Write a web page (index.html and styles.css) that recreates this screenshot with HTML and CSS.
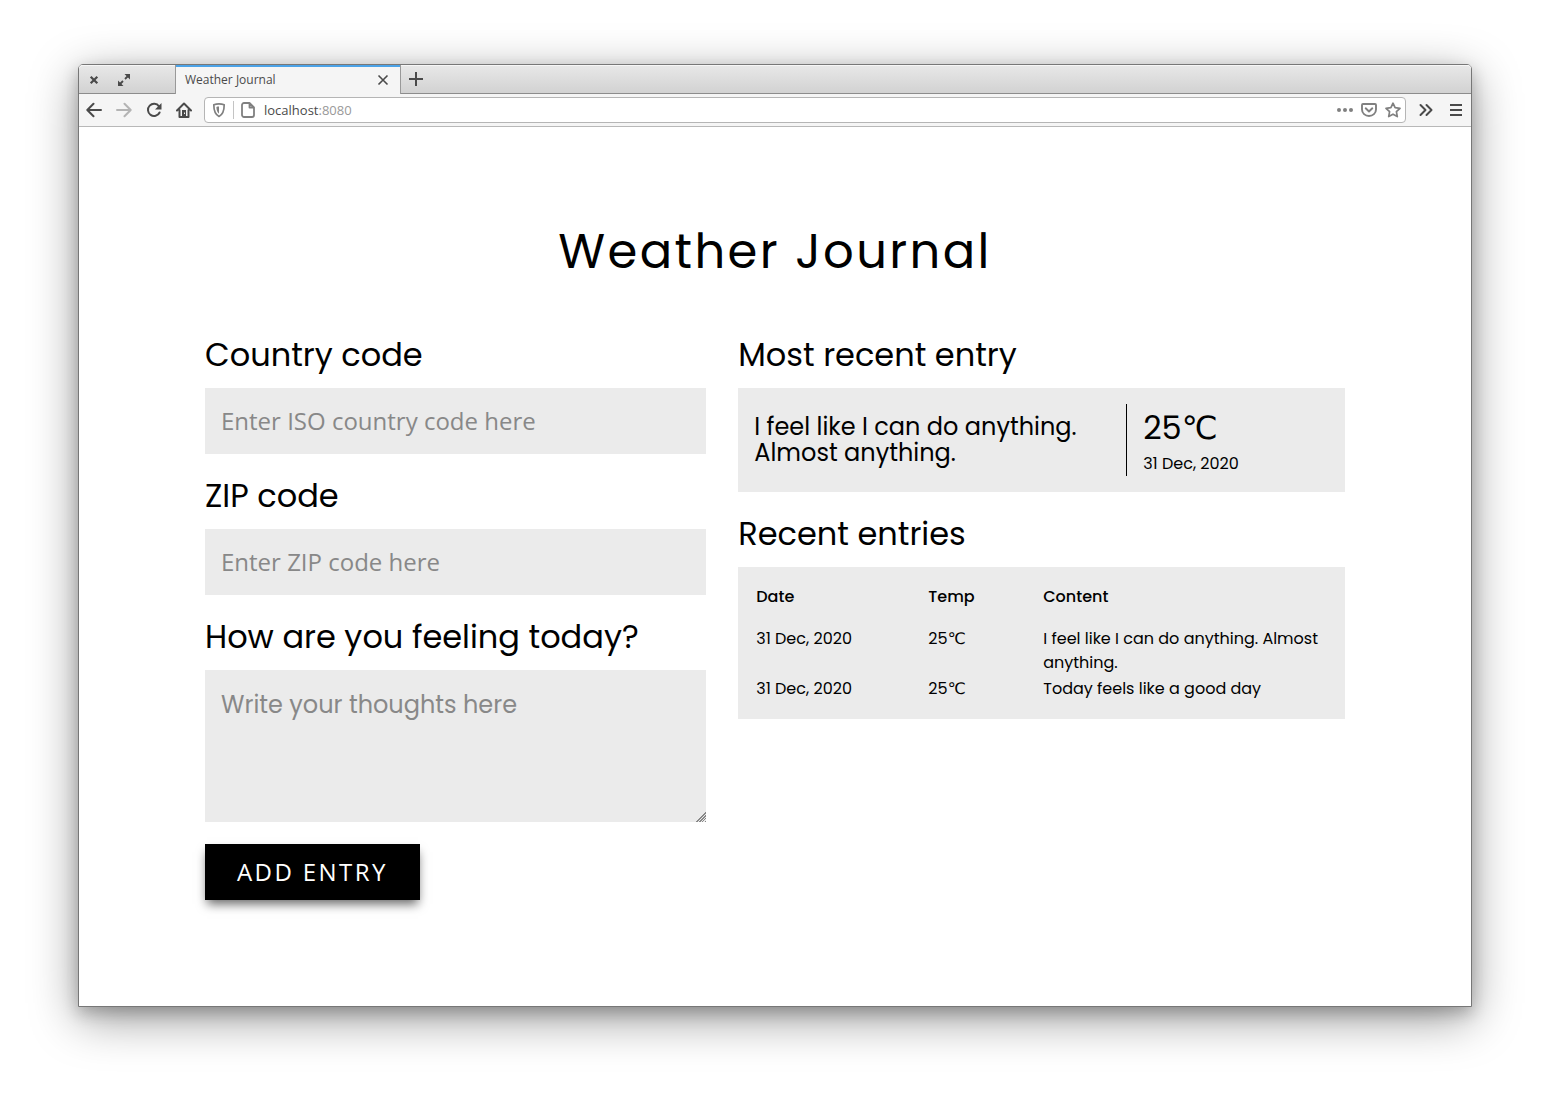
FILE: index.html
```html
<!DOCTYPE html>
<html lang="en">
<head>
<meta charset="utf-8">
<title>Weather Journal</title>
<link rel="stylesheet" href="styles.css">
</head>
<body>
<div class="window">
  <header class="chrome">
    <div class="tabbar">
      <div class="window-controls">
        <button type="button" class="icon-button" aria-label="Close window"><svg width="16" height="16" viewBox="0 0 16 16"><path d="M4.700 4.700l6.600 6.600M11.300 4.700l-6.600 6.600" stroke-width="2.200"/></svg></button>
        <button type="button" class="icon-button" aria-label="Maximize window"><svg width="16" height="16" viewBox="0 0 16 16"><path d="M9 7l3-3M7 9l-3 3" stroke-width="1.800"/><path class="solid" d="M8.500 2H14v5.500zM2 8.500V14h5.500z"/></svg></button>
      </div>
      <div class="tab">
        <span class="tab-title">Weather Journal</span>
        <button type="button" class="icon-button" aria-label="Close tab"><svg width="16" height="16" viewBox="0 0 16 16"><path d="M3.500 3.500l9 9M12.500 3.500l-9 9" stroke-width="1.600"/></svg></button>
      </div>
      <button type="button" class="icon-button new-tab" aria-label="New tab"><svg width="16" height="16" viewBox="0 0 16 16"><path d="M8 1v14M1 8h14" stroke-width="2"/></svg></button>
    </div>
    <div class="toolbar">
      <button type="button" class="icon-button" aria-label="Back"><svg width="16" height="16" viewBox="0 0 16 16"><path d="M1.500 8H15M7.500 1.800L1.300 8l6.200 6.200" stroke-width="2" stroke-linecap="round" stroke-linejoin="round"/></svg></button>
      <button type="button" class="icon-button faded" aria-label="Forward"><svg width="16" height="16" viewBox="0 0 16 16"><path d="M14.500 8H1M8.500 1.800L14.700 8l-6.200 6.200" stroke-width="2" stroke-linecap="round" stroke-linejoin="round"/></svg></button>
      <button type="button" class="icon-button" aria-label="Reload"><svg width="16" height="16" viewBox="0 0 16 16"><path d="M13 4.300A6.100 6.100 0 1 0 13.600 10.500" stroke-width="2" stroke-linecap="round"/><path class="solid" d="M15.500 1v6.500H9z"/></svg></button>
      <button type="button" class="icon-button" aria-label="Home"><svg width="16" height="16" viewBox="0 0 16 16"><path d="M1 8.500L8 1.500l7 7M3.500 8V15h9V8" stroke-width="2" stroke-linecap="round" stroke-linejoin="round"/><path class="solid" fill-rule="evenodd" d="M6 8h4v7H6zM8 10.500h1v1.500H8z"/></svg></button>
      <div class="address">
        <svg class="muted" width="16" height="16" viewBox="0 0 16 16"><path d="M8 1.800c1.800 0 3.600.3 5.200.9 0 5.500-.8 9.500-5.200 11.700C3.600 12.200 2.800 8.200 2.800 2.700 4.400 2.100 6.200 1.800 8 1.800z" stroke-width="1.700" stroke-linejoin="round"/><path class="solid" d="M8 4.500v7.300C6.200 10.300 5.500 8 5.400 4.900 6.200 4.600 7 4.500 8 4.500z"/></svg>
        <span class="divider"></span>
        <svg class="muted" width="16" height="16" viewBox="0 0 16 16"><path d="M4 1h5.500L14 5.500V13a2 2 0 0 1-2 2H4a2 2 0 0 1-2-2V3a2 2 0 0 1 2-2zM9.500 1v4.500H14" stroke-width="1.800" stroke-linejoin="round"/></svg>
        <span class="url">localhost<span class="port">:8080</span></span>
        <svg class="muted" width="16" height="16" viewBox="0 0 16 16"><circle class="solid" cx="2" cy="8" r="2"/><circle class="solid" cx="8" cy="8" r="2"/><circle class="solid" cx="14" cy="8" r="2"/></svg>
        <svg class="muted" width="16" height="16" viewBox="0 0 16 16"><path d="M2 2h12a1 1 0 0 1 1 1v4.500a7 6.500 0 0 1-14 0V3a1 1 0 0 1 1-1zM4.700 6.300L8 9.500l3.300-3.200" stroke-width="1.900" stroke-linecap="round" stroke-linejoin="round"/></svg>
        <svg class="muted" width="16" height="16" viewBox="0 0 16 16"><path d="M8 1.200l2.100 4.500 4.900.6-3.600 3.400.9 4.900L8 12.200l-4.300 2.400.9-4.900L1 6.300l4.900-.6z" stroke-width="1.700" stroke-linejoin="round"/></svg>
      </div>
      <button type="button" class="icon-button" aria-label="More tools"><svg width="16" height="16" viewBox="0 0 16 16"><path d="M2.500 3L7.500 8l-5 5M8.500 3l5 5-5 5" stroke-width="2" stroke-linecap="round" stroke-linejoin="round"/></svg></button>
      <button type="button" class="icon-button" aria-label="Menu"><svg width="16" height="16" viewBox="0 0 16 16"><path d="M2 3h12M2 8h12M2 13h12" stroke-width="2"/></svg></button>
    </div>
  </header>
  <main class="page">
    <h1 class="title">Weather Journal</h1>
    <div class="columns">
      <form class="column">
        <label class="heading" for="country">Country code</label>
        <input class="field" id="country" type="text" placeholder="Enter ISO country code here">
        <label class="heading" for="zip">ZIP code</label>
        <input class="field" id="zip" type="text" placeholder="Enter ZIP code here">
        <label class="heading" for="feelings">How are you feeling today?</label>
        <textarea class="field thoughts" id="feelings" placeholder="Write your thoughts here"></textarea>
        <button class="submit" type="button">Add entry</button>
      </form>
      <div class="column">
        <h2 class="heading">Most recent entry</h2>
        <section class="panel latest">
          <p class="latest-text">I feel like I can do anything. Almost anything.</p>
          <div class="latest-meta">
            <p class="latest-temp">25℃</p>
            <p class="latest-date">31 Dec, 2020</p>
          </div>
        </section>
        <h2 class="heading">Recent entries</h2>
        <section class="panel">
          <table class="entries">
            <thead>
              <tr><th class="col-date">Date</th><th class="col-temp">Temp</th><th>Content</th></tr>
            </thead>
            <tbody>
              <tr><td>31 Dec, 2020</td><td>25℃</td><td>I feel like I can do anything. Almost anything.</td></tr>
              <tr><td>31 Dec, 2020</td><td>25℃</td><td>Today feels like a good day</td></tr>
            </tbody>
          </table>
        </section>
      </div>
    </div>
  </main>
</div>
</body>
</html>
```

FILE: styles.css
```css
* {
  box-sizing: border-box;
}

body {
  display: flex;
  min-height: 100vh;
  margin: 0;
  padding: 64px 78px 92px;
  background: #fff;
  color: #000;
  font: 16px/24px Poppins, "DejaVu Sans", sans-serif;
}

h1, h2, p {
  margin: 0;
  font-weight: 400;
}

.window {
  display: flex;
  flex: 1;
  flex-direction: column;
  min-width: 0;
  border: 1px solid #777;
  border-radius: 5px 5px 0 0;
  background: #fff;
  box-shadow: 0 12px 48px rgba(0, 0, 0, .4), 0 6px 16px rgba(0, 0, 0, .22);
}

/* Browser chrome */
.chrome {
  color: #4a4a4a;
  font: 12px/16px "Open Sans", sans-serif;
}

.tabbar {
  display: flex;
  height: 29px;
  border-bottom: 1px solid #8c8c8c;
  border-radius: 4px 4px 0 0;
  background: linear-gradient(#e8e8e8, #d2d2d2);
  box-shadow: inset 0 1px #f6f6f6;
}

.window-controls {
  display: flex;
  gap: 14px;
  width: 96px;
  padding: 2px 0 0 7px;
}

.tab {
  display: flex;
  align-items: center;
  justify-content: space-between;
  width: 226px;
  height: 29px;
  padding: 0 9px;
  border: solid #999;
  border-width: 0 1px;
  background: #f5f5f5;
  box-shadow: inset 0 2px #4ba3e8;
}

.icon-button {
  display: flex;
  flex: none;
  align-items: center;
  justify-content: center;
  padding: 0;
  border: 0;
  background: none;
  color: #4a4a4a;
}

.new-tab {
  padding-left: 7px;
}

svg {
  display: block;
  flex: none;
  fill: none;
  stroke: currentColor;
}

.solid {
  fill: currentColor;
  stroke: none;
}

.toolbar {
  display: flex;
  align-items: center;
  gap: 14px;
  height: 33px;
  padding: 0 7px;
  border-bottom: 1px solid #b8b8b8;
  background: #f5f5f5;
}

.address {
  display: flex;
  flex: 1;
  align-items: center;
  gap: 8px;
  height: 26px;
  margin: 0 -2px;
  padding: 0 4px 0 6px;
  border: 1px solid #b5b5b5;
  border-radius: 4px;
  background: #fff;
}

.divider {
  width: 1px;
  height: 18px;
  margin: 0 -2px;
  background: #c4c4c4;
}

.url {
  flex: 1;
  font-size: 13px;
}

.port {
  color: #999;
}

.muted {
  color: #808080;
}

.faded {
  color: #b4b4b4;
}

/* Journal */
.page {
  width: 100%;
  max-width: 1172px;
  margin: 0 auto;
  padding: 89px 16px;
}

.title {
  margin-bottom: 43px;
  font-size: 48px;
  line-height: 72px;
  letter-spacing: .05em;
  text-align: center;
}

.columns {
  display: grid;
  grid-template-columns: 19fr 23fr;
  gap: 32px;
}

.column {
  display: flex;
  flex-direction: column;
  align-items: stretch;
  min-width: 0;
}

.heading {
  margin-bottom: 9px;
  font-size: 32px;
  line-height: 48px;
}

.field {
  width: 100%;
  height: 66px;
  margin: 0 0 18px;
  padding: 15px 16px 17px;
  border: 0;
  border-radius: 0;
  background: #ebebeb;
  color: #000;
  font: 24px/32px "Open Sans", sans-serif;
}

.field::placeholder {
  color: #888;
  opacity: 1;
}

.thoughts {
  height: 152px;
  margin-bottom: 22px;
  font-family: Poppins, "Open Sans", sans-serif;
  line-height: 40px;
  resize: vertical;
}

.thoughts::-webkit-resizer {
  background:
    linear-gradient(135deg, #ebebeb 62%, transparent 62%),
    repeating-linear-gradient(135deg, #888 0 1px, #ebebeb 1px 2px);
}

.submit {
  align-self: flex-start;
  height: 56px;
  padding: 0 32px;
  border: 0;
  background: #000;
  box-shadow: 0 6px 10px -2px rgba(0, 0, 0, .6);
  color: #fff;
  font: 24px/32px "Open Sans", sans-serif;
  letter-spacing: .1em;
  text-transform: uppercase;
}

.panel {
  margin-bottom: 18px;
  padding: 16px;
  background: #ebebeb;
}

.latest {
  display: grid;
  grid-template-columns: 11fr 6fr;
  align-items: center;
}

.latest-text {
  padding-right: 16px;
  font-size: 24px;
  line-height: 26px;
}

.latest-meta {
  padding-left: 16px;
  border-left: 1px solid #000;
}

.latest-temp {
  font-size: 32px;
  line-height: 48px;
}

.entries {
  width: 100%;
  border-spacing: 2px;
  table-layout: fixed;
}

.entries th,
.entries td {
  padding: 0;
  text-align: left;
  vertical-align: top;
}

.entries th {
  padding-bottom: 16px;
  font-weight: 500;
}

.col-date {
  width: 170px;
}

.col-temp {
  width: 113px;
}
```
